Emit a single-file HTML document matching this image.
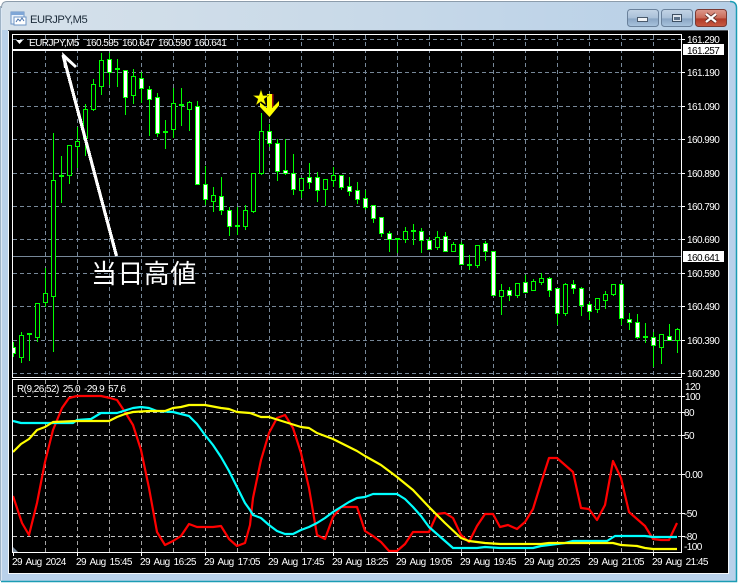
<!DOCTYPE html>
<html><head><meta charset="utf-8"><style>
html,body{margin:0;padding:0;background:#fff;width:739px;height:583px;overflow:hidden}
svg{display:block}
text{font-family:"Liberation Sans","Noto Sans CJK JP",sans-serif;font-size:10px;fill:#fff;letter-spacing:-.55px;word-spacing:1.8px}
</style></head><body>
<svg width="739" height="583" viewBox="0 0 739 583" xmlns="http://www.w3.org/2000/svg">
<defs>
<linearGradient id="tb" x1="0" x2="1" y1="0" y2="0"><stop offset="0" stop-color="#d6e1ea"/><stop offset=".5" stop-color="#c8d9e8"/><stop offset="1" stop-color="#b6cfe7"/></linearGradient>
<linearGradient id="btn" x1="0" x2="0" y1="0" y2="1"><stop offset="0" stop-color="#c3d4e6"/><stop offset=".5" stop-color="#a9c0d8"/><stop offset=".55" stop-color="#8aa6c4"/><stop offset="1" stop-color="#a9c4de"/></linearGradient>
<linearGradient id="cls" x1="0" x2="0" y1="0" y2="1"><stop offset="0" stop-color="#dc9a8e"/><stop offset=".5" stop-color="#c96a58"/><stop offset=".55" stop-color="#b03a28"/><stop offset="1" stop-color="#c85a44"/></linearGradient>
<clipPath id="pl"><rect x="13" y="35" width="668" height="342"/></clipPath>
<clipPath id="ip"><rect x="13" y="380" width="668" height="172"/></clipPath>
</defs>
<!-- window frame -->
<path d="M1.5 581.5V7Q1.5 1.500 7 1.500H730Q736 1.500 736 7V581.500Z" fill="#b9d1ea"/>
<path d="M2 30V7Q2 2 7 2H730Q735.500 2 735.500 7V30Z" fill="url(#tb)"/>
<path d="M1.500 8Q1.500 1.500 7 1.500H730" fill="none" stroke="#8c9cab"/>
<path d="M730 1.500Q736.500 1.500 736.500 8V581.500H1" fill="none" stroke="#1b9cb4" stroke-width="1.500"/>
<path d="M.5 6V581" stroke="#9fb3c6"/>
<!-- title icon -->
<g shape-rendering="crispEdges">
<rect x="11" y="12" width="13" height="12" fill="#eaf2fb" stroke="#6d94c4"/>
<rect x="11" y="12" width="13" height="3" fill="#7fa6d6"/>
<rect x="14" y="17" width="12" height="8" fill="#fff" stroke="#6d94c4"/>
</g>
<path d="M16 22l2-3 2 2 2-3 2 3" fill="none" stroke="#4a74ad"/>
<text x="30" y="23" style="font-size:11.2px;letter-spacing:-.45px;word-spacing:0;fill:#1c2b3a">EURJPY,M5</text>
<!-- buttons -->
<rect x="627.500" y="9.500" width="31" height="17" rx="3" fill="url(#btn)" stroke="#6a819b"/>
<rect x="661.500" y="9.500" width="31" height="17" rx="3" fill="url(#btn)" stroke="#6a819b"/>
<rect x="695.500" y="9.500" width="31" height="17" rx="3" fill="url(#cls)" stroke="#7a3a34"/>
<rect x="637.500" y="17.500" width="10" height="4" fill="#f1f4f7" stroke="#4a5a6c"/>
<rect x="672.500" y="14.500" width="9" height="7" fill="#dde5ee" stroke="#3d4f63"/>
<rect x="674" y="17" width="6" height="3" fill="#5a7088"/>
<path d="M706 14l10 8M716 14l-10 8" stroke="#5a2a26" stroke-width="4"/>
<path d="M706 14l10 8M716 14l-10 8" stroke="#fff" stroke-width="2.400"/>
<!-- client area -->
<rect x="8" y="30" width="721" height="544" fill="#f4f8fb"/>
<rect x="8" y="30" width="720" height="1" fill="#4a4f55"/>
<rect x="9" y="31" width="719" height="542" fill="#000"/>
<g clip-path="url(#pl)" shape-rendering="crispEdges">
<path fill="none" stroke="#778899" stroke-dasharray="4 3" d="M45.500 35V377M77.500 35V377M109.500 35V377M141.500 35V377M173.500 35V377M205.500 35V377M237.500 35V377M269.500 35V377M301.500 35V377M333.500 35V377M365.500 35V377M397.500 35V377M429.500 35V377M461.500 35V377M493.500 35V377M525.500 35V377M557.500 35V377M589.500 35V377M621.500 35V377M653.500 35V377"/>
<path fill="none" stroke="#778899" stroke-dasharray="4 3" d="M13 39.500H681M13 72.500H681M13 106.500H681M13 139.500H681M13 173.500H681M13 206.500H681M13 239.500H681M13 273.500H681M13 306.500H681M13 340.500H681M13 373.500H681"/>
<path d="M13 256.500H681" stroke="#778899"/>
<path fill="none" stroke="#00ff00" d="M13.500 342V357M21.500 332V363M29.500 334V361M37.500 303V342M45.500 268V307M53.500 133V352M61.500 156V203M69.500 145V184M77.500 127V168M85.500 104V156M93.500 79V111M101.500 53V95M109.500 53V85M117.500 59V87M125.500 70V115M133.500 69V104M141.500 72V103M149.500 86V136M157.500 93V137M165.500 120V149M173.500 88V138M181.500 88V126M189.500 101V131M197.500 101V184M205.500 166V205M213.500 187V212M221.500 177V215M229.500 207V236M237.500 207V235M245.500 205V230M253.500 173V213M261.500 113V175M269.500 124V147M277.500 139V181M285.500 139V175M293.500 154V195M301.500 178V198M309.500 163V189M317.500 172V202M325.500 179V206M333.500 167V187M341.500 175V190M349.500 177V196M357.500 182V204M365.500 190V210M373.500 205V223M381.500 217V237M389.500 231V252M397.500 239V253M405.500 227V243M413.500 224V245M421.500 228V253M429.500 237V249M437.500 231V250M445.500 232V252M453.500 242V251M461.500 242V264M469.500 255V270M477.500 245V268M485.500 241V261M493.500 251V296M501.500 284V315M509.500 287V301M517.500 283V298M525.500 275V292M533.500 279V290M541.500 273V285M549.500 277V297M557.500 288V325M565.500 283V316M573.500 280V294M581.500 287V316M589.500 302V320M597.500 298V313M605.500 291V309M613.500 284V296M621.500 283V325M629.500 313V330M637.500 314V339M645.500 323V343M653.500 332V367M661.500 334V364M669.500 324V341M677.500 328V353"/>
<path fill="#000" stroke="#00ff00" d="M19.500 335.500h4v22h-4zM35.500 303.500h4v34h-4zM43.500 293.500h4v9h-4zM51.500 180.500h4v116h-4zM67.500 145.500h4v30h-4zM75.500 141.500h4v5h-4zM83.500 109.500h4v29h-4zM91.500 84.500h4v25h-4zM99.500 60.500h4v26h-4zM131.500 76.500h4v19h-4zM171.500 103.500h4v26h-4zM187.500 102.500h4v7h-4zM211.500 195.500h4v6h-4zM243.500 210.500h4v16h-4zM251.500 173.500h4v38h-4zM259.500 131.500h4v42h-4zM299.500 178.500h4v12h-4zM323.500 179.500h4v10h-4zM331.500 175.500h4v5h-4zM403.500 231.500h4v8h-4zM435.500 237.500h4v10h-4zM451.500 244.500h4v7h-4zM475.500 245.500h4v20h-4zM499.500 290.500h4v6h-4zM515.500 283.500h4v12h-4zM531.500 281.500h4v9h-4zM539.500 278.500h4v4h-4zM563.500 284.500h4v29h-4zM595.500 298.500h4v11h-4zM603.500 294.500h4v6h-4zM611.500 284.500h4v10h-4zM659.500 334.500h4v13h-4zM675.500 329.500h4v11h-4z"/>
<path fill="#fff" stroke="#00ff00" d="M11.500 347.500h4v6h-4zM107.500 59.500h4v13h-4zM123.500 70.500h4v27h-4zM139.500 78.500h4v10h-4zM147.500 89.500h4v10h-4zM155.500 97.500h4v36h-4zM195.500 106.500h4v78h-4zM203.500 184.500h4v15h-4zM219.500 196.500h4v14h-4zM227.500 210.500h4v16h-4zM267.500 131.500h4v12h-4zM275.500 143.500h4v28h-4zM283.500 170.500h4v3h-4zM291.500 173.500h4v16h-4zM307.500 177.500h4v5h-4zM315.500 177.500h4v13h-4zM339.500 175.500h4v12h-4zM347.500 186.500h4v5h-4zM355.500 190.500h4v9h-4zM363.500 198.500h4v9h-4zM371.500 205.500h4v13h-4zM379.500 217.500h4v16h-4zM387.500 233.500h4v6h-4zM419.500 231.500h4v9h-4zM427.500 240.500h4v9h-4zM443.500 236.500h4v15h-4zM459.500 244.500h4v20h-4zM483.500 243.500h4v8h-4zM491.500 251.500h4v44h-4zM507.500 290.500h4v5h-4zM523.500 282.500h4v10h-4zM547.500 278.500h4v12h-4zM555.500 288.500h4v25h-4zM571.500 284.500h4v4h-4zM579.500 288.500h4v17h-4zM587.500 304.500h4v7h-4zM619.500 284.500h4v34h-4zM627.500 319.500h4v3h-4zM635.500 322.500h4v15h-4zM651.500 337.500h4v8h-4zM667.500 336.500h4v4h-4z"/>
<path fill="#00ff00" d="M27 333h5v2h-5zM59 175h5v2h-5zM115 68h5v2h-5zM163 131h5v2h-5zM179 104h5v2h-5zM235 225h5v2h-5zM395 238h5v2h-5zM411 230h5v2h-5zM467 264h5v2h-5zM643 336h5v2h-5z"/>
</g>
<!-- plot borders -->
<g shape-rendering="crispEdges">
<path fill="none" stroke="#fff" d="M12.500 34.500H681.500V377.500H12.500ZM12.500 379.500H681.500V552.500H12.500Z"/>
<rect x="13" y="49" width="669" height="2" fill="#fff"/>
<path stroke="#fff" d="M682 39.500h3M682 72.500h3M682 106.500h3M682 139.500h3M682 173.500h3M682 206.500h3M682 239.500h3M682 273.500h3M682 306.500h3M682 340.500h3M682 373.500h3M682 396.500h3M682 412.500h3M682 435.500h3M682 474.500h3M682 513.500h3M682 536.500h3M13.500 553v3M77.500 553v3M141.500 553v3M205.500 553v3M269.500 553v3M333.500 553v3M397.500 553v3M461.500 553v3M525.500 553v3M589.500 553v3M653.500 553v3"/>
<rect x="683" y="44" width="41" height="11" fill="#fff"/>
<rect x="683" y="251" width="41" height="11" fill="#fff"/>
</g>
<!-- annotation arrow -->
<path d="M116.500 256L63 55" stroke="#fff" stroke-width="3.200" fill="none" shape-rendering="crispEdges"/>
<path d="M62 52L77 66L75 68L66 60L68 68L64 68Z" fill="#fff"/>
<!-- yellow arrow + star -->
<rect x="272" y="94" width="1.500" height="13" fill="#a01010"/>
<path d="M267 94H272V108L279 101V105.500L269.500 117L260 107V102.500L267 108Z" fill="#ffff00"/>
<path d="M261 89.500L263 95.500H269L264 99L266 105L261 101.500L256 105L258 99L253 95.500H259Z" fill="#ffff00" stroke="#3a3000" stroke-width=".4"/>
<!-- indicator -->
<g clip-path="url(#ip)" shape-rendering="crispEdges">
<path fill="none" stroke="#a4a4a4" stroke-dasharray="4 3" d="M45.500 380V552M77.500 380V552M109.500 380V552M141.500 380V552M173.500 380V552M205.500 380V552M237.500 380V552M269.500 380V552M301.500 380V552M333.500 380V552M365.500 380V552M397.500 380V552M429.500 380V552M461.500 380V552M493.500 380V552M525.500 380V552M557.500 380V552M589.500 380V552M621.500 380V552M653.500 380V552"/>
<path fill="none" stroke="#c0c0c0" stroke-dasharray="4 3" d="M13 396.500H681M13 412.500H681M13 435.500H681M13 474.500H681M13 513.500H681M13 536.500H681"/>
</g>
<path d="M13 547L18 552H13Z" fill="#778899"/>
<g clip-path="url(#ip)" fill="none" stroke-width="2.200" stroke-linejoin="round">
<polyline stroke="#ff0000" points="13,496 22,523 29,535 37,503 45,462 53,430 62,408 69,398 77,396 93,396 101,396 110,398 117,400 125,412 133,425 141,450 149,488 157,532 165,545 173,541 181,536 189,524 197,527 213,527 221,526 229,539 237,546 245,543 250,525 253,498 261,460 269,433 277,418 285,415 293,428 301,453 309,488 317,535 325,539 333,517 341,507 357,507 365,531 373,536 381,542 389,551 397,551 405,544 413,532 429,532 437,514 445,513 453,518 461,535 469,542 477,526 485,514 493,514 500,527 508,525 517,529 525,522 533,509 541,483 549,458 557,458 565,465 573,472 581,508 589,509 597,520 605,505 613,461 621,478 629,512 637,519 645,526 653,539 661,540 669,540 677,523"/>
<polyline stroke="#00ffff" points="13,421 21,423 73,423 77,420 91,419 101,413 117,413 133,408 141,407 149,408 157,411 173,412 189,416 197,424 205,435 213,445 221,457 229,471 237,487 245,503 250,510 253,515 261,518 269,525 277,531 285,534 293,534 301,530 309,527 317,523 325,518 333,512 341,507 349,502 357,498 365,497 373,494 397,494 405,499 413,507 421,516 429,527 437,534 445,541 453,548 477,548 485,547 500,548 533,548 541,546 549,545 565,543 573,541 607,541 615,536 645,536 653,537 677,537"/>
<polyline stroke="#ffff00" points="13,452 21,444 29,439 37,430 45,427 53,422 77,421 109,421 117,417 125,414 133,412 149,411 165,411 173,408 181,407 189,405 205,405 221,408 229,409 237,412 250,413 261,417 269,417 285,422 301,427 309,428 317,433 333,439 341,443 357,451 365,456 381,465 397,477 413,490 429,507 445,523 461,538 469,541 485,543 500,544 541,544 549,543 613,543 621,545 637,546 645,548 653,549 677,549"/>
</g>
<!-- texts -->
<path d="M16 40h7l-3.500 4z" fill="#fff"/>
<text x="29" y="46">EURJPY,M5</text>
<text x="86" y="46">160.595</text><text x="122" y="46">160.647</text><text x="158" y="46">160.590</text><text x="194" y="46">160.641</text>
<text x="687" y="43">161.290</text>
<text x="687" y="54" style="fill:#000">161.257</text>
<text x="687" y="76">161.190</text>
<text x="687" y="110">161.090</text>
<text x="687" y="143">160.990</text>
<text x="687" y="177">160.890</text>
<text x="687" y="210">160.790</text>
<text x="687" y="243">160.690</text>
<text x="687" y="261" style="fill:#000">160.641</text>
<text x="687" y="277">160.590</text>
<text x="687" y="310">160.490</text>
<text x="687" y="344">160.390</text>
<text x="687" y="377">160.290</text>
<text x="685" y="390">120</text>
<text x="685" y="400">100</text>
<text x="684" y="416">80</text>
<text x="684" y="439">50</text>
<text x="685" y="478">0.00</text>
<text x="684" y="517">-50</text>
<text x="684" y="540">-80</text>
<text x="684" y="550">-100</text>
<text x="17" y="392">R(9,26,52) 25.0 -29.9 57.6</text>
<text x="12" y="565">29 Aug 2024</text>
<text x="76" y="565">29 Aug 15:45</text>
<text x="140" y="565">29 Aug 16:25</text>
<text x="204" y="565">29 Aug 17:05</text>
<text x="268" y="565">29 Aug 17:45</text>
<text x="332" y="565">29 Aug 18:25</text>
<text x="396" y="565">29 Aug 19:05</text>
<text x="460" y="565">29 Aug 19:45</text>
<text x="524" y="565">29 Aug 20:25</text>
<text x="588" y="565">29 Aug 21:05</text>
<text x="652" y="565">29 Aug 21:45</text>
<text x="91" y="283" style="font-size:26px;letter-spacing:.4px;word-spacing:0">当日高値</text>
</svg>
</body></html>
